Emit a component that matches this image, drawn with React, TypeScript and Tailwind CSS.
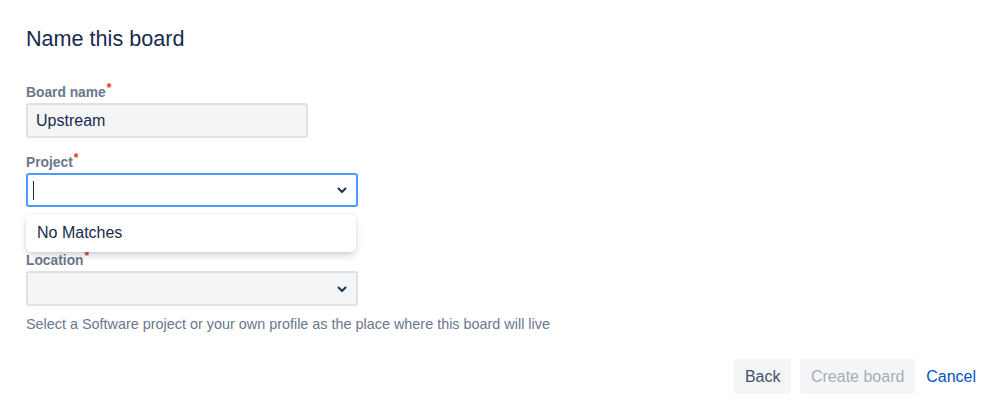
import React from "react";

function Chevron() {
  return (
    <svg width="14" height="14" viewBox="0 0 24 24" className="text-[#253858]">
      <path
        d="M6 9.5 12 15.5l6-6"
        fill="none"
        stroke="currentColor"
        strokeWidth={3.6}
        strokeLinecap="round"
        strokeLinejoin="round"
      />
    </svg>
  );
}

function Label({ text, className }: { text: string; className?: string }) {
  return (
    <div className={"flex h-[16px] items-start text-[13.8px] leading-[16px] font-bold text-[#6B778C] " + (className ?? "")}>
      <span>{text}</span>
      <span className="ml-[1px] -mt-[3px] text-[12px] leading-[12px] text-[#DE350B]">*</span>
    </div>
  );
}

export default function App() {
  return (
    <div className="relative min-h-[408px] w-full bg-white pt-[25px] pl-[26px] font-['Liberation_Sans',Arial,sans-serif]">
      <h1 className="text-[21.6px] leading-[28px] font-normal text-[#172B4D]">Name this board</h1>

      {/* Board name */}
      <Label text="Board name" className="mt-[32px]" />
      <div className="mt-[2px] flex h-[35px] w-[282px] items-center rounded-[3px] border-2 border-[#DFE1E6] bg-[#F4F5F7] pl-[8px] text-[16px] text-[#172B4D]">
        Upstream
      </div>

      {/* Project */}
      <Label text="Project" className="mt-[17px]" />
      <div className="relative mt-[2px] w-[332px]">
        <div className="flex h-[34px] items-center justify-between rounded-[3px] border-2 border-[#4C9AFF] bg-white pr-[7px] pl-[5px]">
          <span className="h-[19px] w-[1px] bg-[#172B4D]" />
          <Chevron />
        </div>
        <div className="absolute top-[41px] left-0 z-10 flex h-[38px] w-[330px] items-center rounded-[4px] bg-white pl-[11px] text-[16px] text-[#172B4D] shadow-[0_4px_8px_-2px_rgba(9,30,66,0.25),0_0_1px_rgba(9,30,66,0.31)]">
          No Matches
        </div>
      </div>

      {/* Location */}
      <Label text="Location" className="mt-[46px]" />
      <div className="mt-[2px] flex h-[35px] w-[332px] items-center justify-end rounded-[3px] border-2 border-[#DFE1E6] bg-[#F4F5F7] pr-[7px]">
        <Chevron />
      </div>
      <p className="mt-[8px] text-[14.4px] leading-[20px] text-[#6B778C]">
        Select a Software project or your own profile as the place where this board will live
      </p>

      {/* Actions */}
      <div className="mt-[25px] flex items-center justify-end pr-[22px]">
        <button className="flex h-[35px] w-[57px] items-center justify-center rounded-[3px] bg-[#F4F5F7] text-[16px] text-[#42526E]">
          Back
        </button>
        <button
          disabled
          className="ml-[9px] flex h-[35px] w-[115px] items-center justify-center rounded-[3px] bg-[#F4F5F7] text-[16px] text-[#A5ADBA]"
        >
          Create board
        </button>
        <button className="ml-[11px] text-[16px] text-[#0052CC]">Cancel</button>
      </div>
    </div>
  );
}
